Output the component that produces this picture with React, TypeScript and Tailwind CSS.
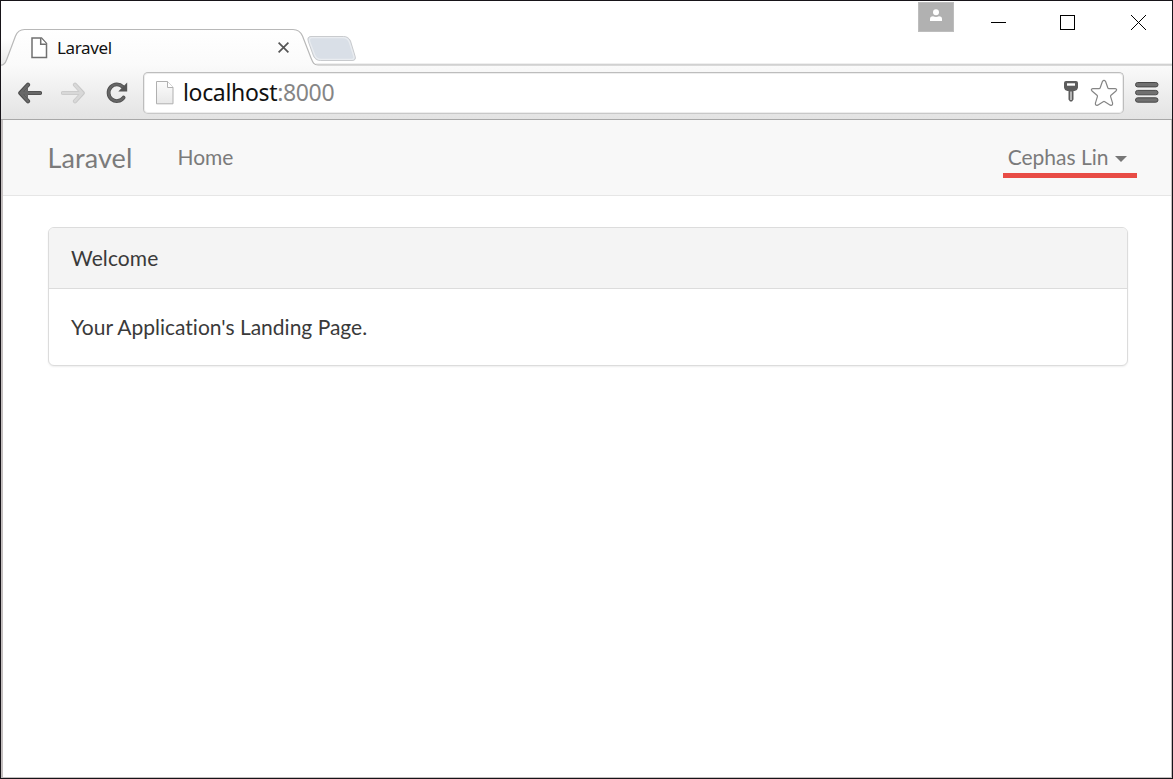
import type { ReactNode } from "react";

function TabShape() {
  return (
    <svg className="absolute left-0 top-0" width="1171" height="66" viewBox="1 1 1171 66" fill="none">
      <defs>
        <linearGradient id="tabFill" x1="0" y1="29" x2="0" y2="67" gradientUnits="userSpaceOnUse">
          <stop offset="0" stopColor="#ffffff" />
          <stop offset="1" stopColor="#fafafa" />
        </linearGradient>
        <linearGradient id="leftShade" x1="0" y1="38" x2="0" y2="66" gradientUnits="userSpaceOnUse">
          <stop offset="0" stopColor="#fff" />
          <stop offset="1" stopColor="#e8e8e8" />
        </linearGradient>
      </defs>
      <path d="M1 66V38H13L6 62Q5 65 1 66Z" fill="url(#leftShade)" />
      <path
        d="M1 65.2C4 65 5.2 63.5 6.5 60L15.5 36C17.5 31 20 29.5 24.500 29.5H293C298 29.5 300.500 31.500 302.500 36L311 58C313 63 314 65 318 65H1172V67H1Z"
        fill="url(#tabFill)"
      />
      <path
        d="M1 65.2C4 65 5.2 63.5 6.5 60L15.5 36C17.5 31 20 29.5 24.500 29.5H293C298 29.5 300.500 31.500 302.500 36L311 58C313 63 314 65 318 65H1172"
        stroke="#b8b8b8"
        strokeWidth="1.2"
      />
      <path d="M316 64.200H1172" stroke="#cccccc" strokeWidth="1" />
      <path
        d="M311 36.500H343.500Q348.500 36.500 350.500 41L355 56Q356.500 60.500 352 60.500H320.500Q315.500 60.500 313.500 56L308.500 42Q306.500 36.500 311 36.500Z"
        fill="#d9dfe7"
        stroke="#c9cbce"
      />
      <path
        d="M312 37.700H343Q347.500 37.700 349.300 42L353.600 55.500Q355 59.300 351.500 59.300H321Q316.500 59.300 314.700 55L309.800 42Q308.500 37.700 312 37.700Z"
        stroke="#e9ecf0"
        strokeWidth="1.2"
      />
    </svg>
  );
}

function PageIcon() {
  return (
    <svg width="17" height="22" viewBox="0 0 17 22" fill="#fff" stroke="#707070" strokeWidth="1.5">
      <path d="M1 1H10.500L15.500 6.500V20.500H1Z" />
      <path d="M9.700 1V7.200H15.500" />
    </svg>
  );
}

function SitePageIcon() {
  return (
    <svg width="18" height="24" viewBox="0 0 18 24" stroke="#b0b0b0">
      <defs>
        <linearGradient id="siteFill" x1="0" y1="0" x2="0" y2="1">
          <stop offset="0" stopColor="#fcfcfc" />
          <stop offset="1" stopColor="#e8e8e8" />
        </linearGradient>
      </defs>
      <path d="M.5 .5H11.500L17 6.500V22.800H.5Z" fill="url(#siteFill)" />
      <path d="M11.500 .5V6.500H17" fill="#fff" />
    </svg>
  );
}

function ArrowIcon({ forward = false }: { forward?: boolean }) {
  return (
    <svg className={forward ? "-scale-x-100" : ""} width="24" height="22" viewBox="0 0 24 22" fill="none" strokeLinecap="round" strokeLinejoin="round">
      <path d="M10 2.800L2.300 11L10 19.200M3 11H22" stroke={forward ? "#c8c8c8" : "#4c4c4c"} strokeWidth="4.200" />
      <path d="M10 2.800L2.600 11L10 19.200M3 11H22" stroke={forward ? "#d8d8d8" : "#686868"} strokeWidth="2.600" />
      <path d="M10 5L5 11L10 17Z" fill={forward ? "none" : "#686868"} />
    </svg>
  );
}

function ReloadIcon() {
  return (
    <svg width="22" height="22" viewBox="0 0 22 22" fill="none">
      <path d="M16.800 4.900A8.300 8.300 0 1 0 17.600 15.600" stroke="#505050" strokeWidth="3.800" strokeLinecap="round" />
      <path d="M16.800 4.900A8.300 8.300 0 1 0 17.600 15.600" stroke="#666" strokeWidth="2.200" strokeLinecap="round" />
      <path d="M21.200 .6V9.500H12.300Z" fill="#555" />
    </svg>
  );
}

function KeyIcon() {
  return (
    <svg width="14" height="21" viewBox="0 0 14 21">
      <path d="M2 0H12Q14 0 14 2V6.500Q13.500 9.500 10.500 10H9.500V18.500L8 20.500H6L4.500 18.500V10H3.500Q.5 9.500 0 6.500V2Q0 0 2 0Z" fill="#5c5c5c" />
      <rect x="3" y="2.300" width="8" height="2.400" fill="#fff" />
      <rect x="6" y="10.500" width="2" height="8.500" fill="#b5b5b5" />
    </svg>
  );
}

function StarIcon() {
  return (
    <svg width="28" height="28" viewBox="0 0 28 28" fill="#fff" stroke="#858585" strokeWidth="1.200" strokeLinejoin="round">
      <path d="M12.400 2.500Q14 .2 15.600 2.500L17.800 8.800Q18.100 9.600 19 9.600H25.200Q27.600 10 26 12L21 16.200Q20.300 16.800 20.600 17.600L22.600 24.200Q22.700 26.900 20.300 26.200L14.800 22.700Q14 22.200 13.200 22.700L7.700 26.200Q5.300 26.900 5.400 24.200L7.400 17.600Q7.700 16.800 7 16.200L2 12Q.4 10 2.800 9.600H9Q9.900 9.600 10.200 8.800Z" />
    </svg>
  );
}

function MenuIcon() {
  return (
    <svg width="24" height="21" viewBox="0 0 24 21" fill="#707070" stroke="#484848">
      <rect x=".5" y=".5" width="22.500" height="4.400" rx="2.200" />
      <rect x=".5" y="8.400" width="22.500" height="4.400" rx="2.200" />
      <rect x=".5" y="15.800" width="22.500" height="4.400" rx="2.200" />
    </svg>
  );
}

function TitleBar() {
  return (
    <div className="relative flex h-[65px] shrink-0 items-start">
      <TabShape />
      <div className="relative mt-[29px] flex h-[36px] w-[304px] items-center pl-[30px]">
        <PageIcon />
        <span className="ml-[9px] -mt-px font-['Noto_Sans','Open_Sans',sans-serif] text-[17px] leading-6 tracking-[-0.35px] text-[#111]">
          Laravel
        </span>
        <svg className="ml-auto mr-[16px] -mt-px" width="11" height="11" viewBox="0 0 11 11" stroke="#555" strokeWidth="1.700">
          <path d="M.6 .6L10.400 10.400M10.400 .6L.6 10.400" />
        </svg>
      </div>
      <div className="relative ml-auto flex">
        <div className="mt-px mr-[37px] flex h-[30px] w-[36px] justify-center border border-[#bdbdbd] bg-[#b1b1b1] pt-[6px]">
          <svg width="12" height="13" viewBox="0 0 12 13" fill="#fff">
            <circle cx="6" cy="3.200" r="3" />
            <path d="M0 12V10Q0 7.300 3 7.300Q6 8.800 9 7.300Q12 7.300 12 10V12Z" />
          </svg>
        </div>
        <svg className="mt-[14px] mr-[54px]" width="15" height="15" viewBox="0 0 15 15" stroke="#000">
          <path d="M0 7.500H15" />
        </svg>
        <svg className="mt-[14px] mr-[56px]" width="15" height="15" viewBox="0 0 15 15" stroke="#000" fill="none">
          <rect x=".5" y=".5" width="14" height="14" />
        </svg>
        <svg className="mt-[14px] mr-[26px]" width="15" height="15" viewBox="0 0 15 15" stroke="#000">
          <path d="M0 0L15 15M15 0L0 15" />
        </svg>
      </div>
    </div>
  );
}

function Toolbar() {
  return (
    <div className="relative flex h-[54px] shrink-0 items-center border-b border-[#a8a8a8] bg-linear-to-b from-[#fafafa] to-[#e3e3e3] pl-[16.5px]">
      <ArrowIcon />
      <span className="ml-[19px] flex"><ArrowIcon forward /></span>
      <span className="ml-[21px] flex"><ReloadIcon /></span>
      <div className="ml-[15.5px] flex h-[42px] w-[981px] items-center rounded-[5px] border border-[#bdbdbd] border-b-[#c8c8c8] bg-white shadow-[inset_0_0_0_1px_#ededed]">
        <span className="ml-3 flex"><SitePageIcon /></span>
        <span className="-mt-[2px] ml-[9px] font-['Noto_Sans','Open_Sans',sans-serif] text-[23px] leading-8 tracking-[-0.34px] text-[#111]">
          localhost<span className="text-[#858585]">:8000</span>
        </span>
        <span className="ml-auto mb-[3px] flex"><KeyIcon /></span>
        <span className="ml-[12.5px] mr-[5px] flex"><StarIcon /></span>
      </div>
      <span className="ml-[11px] flex"><MenuIcon /></span>
    </div>
  );
}

function Navbar() {
  return (
    <nav className="flex h-[76px] items-center border-b border-[#e6e6e6] bg-[#f8f8f8] pl-[44.5px] text-[21px] text-[#7b7b7b]">
      <span className="mt-[2px] text-[27px] tracking-[0.1px]">Laravel</span>
      <span className="-mt-[2px] ml-[45px]">Home</span>
      <div className="relative -mt-[2px] mr-[44.5px] ml-auto flex items-center">
        <span>Cephas Lin</span>
        <svg className="ml-[6px] mt-[4px]" width="12" height="6" viewBox="0 0 12 6" fill="#777">
          <path d="M0 0H12L6 6Z" />
        </svg>
        <span className="absolute -left-[5px] top-[32px] h-[5px] w-[134px] bg-[#e84c45]" />
      </div>
    </nav>
  );
}

function Panel({ title, children }: { title: string; children: ReactNode }) {
  return (
    <section className="ml-[45px] mt-[31px] w-[1080px] overflow-hidden rounded-[6px] border border-[#dcdcdc] bg-white text-[21px] text-[#3a3a3a] shadow-[0_1px_2px_rgba(0,0,0,0.07)]">
      <h1 className="flex h-[61px] items-center border-b border-[#dcdcdc] bg-[#f4f4f4] pb-px pl-[22px] tracking-[0.1px]">{title}</h1>
      <div className="flex h-[76px] items-center pb-px pl-[22px] [font-variant-ligatures:none]">{children}</div>
    </section>
  );
}

export default function App() {
  return (
    <div className="relative flex h-[779px] w-[1173px] flex-col overflow-hidden border border-[#171419] bg-white">
      <TitleBar />
      <Toolbar />
      <main className="flex-1 border-r border-b border-l-2 border-[#c4bfbf] font-['Lato',sans-serif]">
        <Navbar />
        <Panel title="Welcome">Your Application's Landing Page.</Panel>
      </main>
    </div>
  );
}
